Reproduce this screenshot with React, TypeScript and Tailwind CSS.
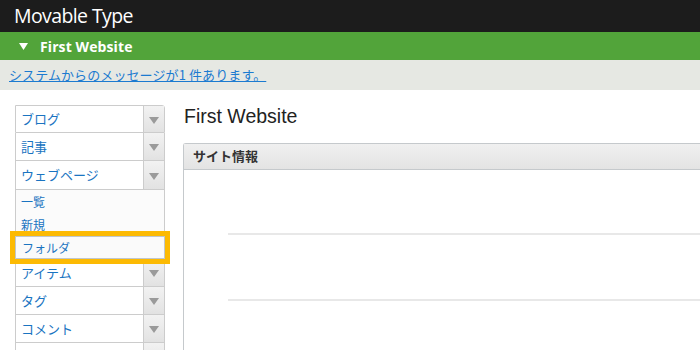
import React from "react";

const Arrow = () => (
  <div className="w-[21px] border-l border-[#cccccc] bg-gradient-to-b from-[#f2f2f2] to-[#e2e2e2] flex items-center justify-center">
    <svg width="10" height="7" viewBox="0 0 10 7" className="mt-[2px]">
      <polygon points="0,0 10,0 5,7" fill="#9a9a9a" />
    </svg>
  </div>
);

const Row = ({ label, first }: { label: string; first?: boolean }) => (
  <div
    className={
      "flex h-[28px] border-x border-b border-[#cccccc] bg-white " +
      (first ? "border-t rounded-tr-[3px]" : "")
    }
  >
    <div className="flex-1 flex items-center pl-[5px] text-[13px] text-[#1a74c1]">{label}</div>
    <Arrow />
  </div>
);

export default function App() {
  return (
    <div
      className="w-[700px] h-[350px] overflow-hidden bg-white"
      style={{ fontFamily: '"Noto Sans", "Noto Sans CJK JP", sans-serif' }}
    >
      <div className="h-[32px] bg-[#1c1c1c] flex items-center pl-[14px]">
        <span
          className="text-white text-[19.5px] leading-none tracking-[-0.6px]"
          style={{ fontFamily: '"Open Sans", sans-serif' }}
        >
          Movable Type
        </span>
      </div>
      <div className="h-[28px] bg-[#52a43a] flex items-center">
        <svg width="9" height="7" viewBox="0 0 9 7" className="ml-[19px] mr-[12px]">
          <polygon points="0,0 9,0 4.5,7" fill="#ffffff" />
        </svg>
        <span
          className="text-white text-[14px] font-bold tracking-[0.1px]"
          style={{ fontFamily: '"Open Sans", sans-serif' }}
        >
          First Website
        </span>
      </div>
      <div className="h-[30px] bg-[#e6e8e3] flex items-center pl-[9px]">
        <a
          href="#"
          className="text-[13px] text-[#1c7bd0] underline tracking-[0.1px]"
          style={{ fontFamily: '"Noto Sans CJK JP", sans-serif' }}
        >
          システムからのメッセージが1 件あります。
        </a>
      </div>
      <div className="flex pt-[15px]" style={{ fontFamily: '"Noto Sans CJK JP", sans-serif' }}>
        <div className="ml-[15px] w-[150px] shrink-0">
          <Row label="ブログ" first />
          <Row label="記事" />
          <div className="flex h-[28px] border-x border-[#cccccc] bg-white">
            <div className="flex-1 flex items-center pl-[5px] text-[13px] text-[#1a74c1]">ウェブページ</div>
            <Arrow />
          </div>
          <div className="border-x border-t border-[#cccccc] bg-[#fbfbfb] h-[70px] flex flex-col">
            <div className="h-[23px] flex items-center pl-[5px] text-[12px] text-[#1a74c1]">一覧</div>
            <div className="h-[23px] flex items-center pl-[5px] text-[12px] text-[#1a74c1]">新規</div>
            <div className="relative z-10 h-[23px] -mx-px flex items-center pl-[6px] text-[12px] text-[#1a74c1] bg-[#fafafa] border border-[#bfc6cd] outline-[5px] outline-solid outline-[#fcba03]">
              フォルダ
            </div>
          </div>
          <Row label="アイテム" />
          <Row label="タグ" />
          <Row label="コメント" />
          <Row label="" />
        </div>
        <div className="ml-[18px] flex-1 min-w-0">
          <div
            className="text-[19.5px] leading-none text-[#222] mt-[2px] ml-[1px]"
            style={{ fontFamily: '"Liberation Sans", Arial, sans-serif' }}
          >
            First Website
          </div>
          <div className="mt-[16px] w-[600px] border-l border-t border-[#c5c9cc] rounded-tl-[3px] h-[300px]">
            <div className="h-[26px] bg-gradient-to-b from-[#f0f0f0] to-[#e3e3e3] border-b border-[#c5c9cc] flex items-center pl-[9px] text-[13px] font-bold text-[#333]">
              サイト情報
            </div>
            <div className="pl-[44px] pt-[63px]">
              <div className="h-[2px] bg-[#e8e8e8]" />
              <div className="h-[2px] bg-[#e8e8e8] mt-[64px]" />
            </div>
          </div>
        </div>
      </div>
    </div>
  );
}
